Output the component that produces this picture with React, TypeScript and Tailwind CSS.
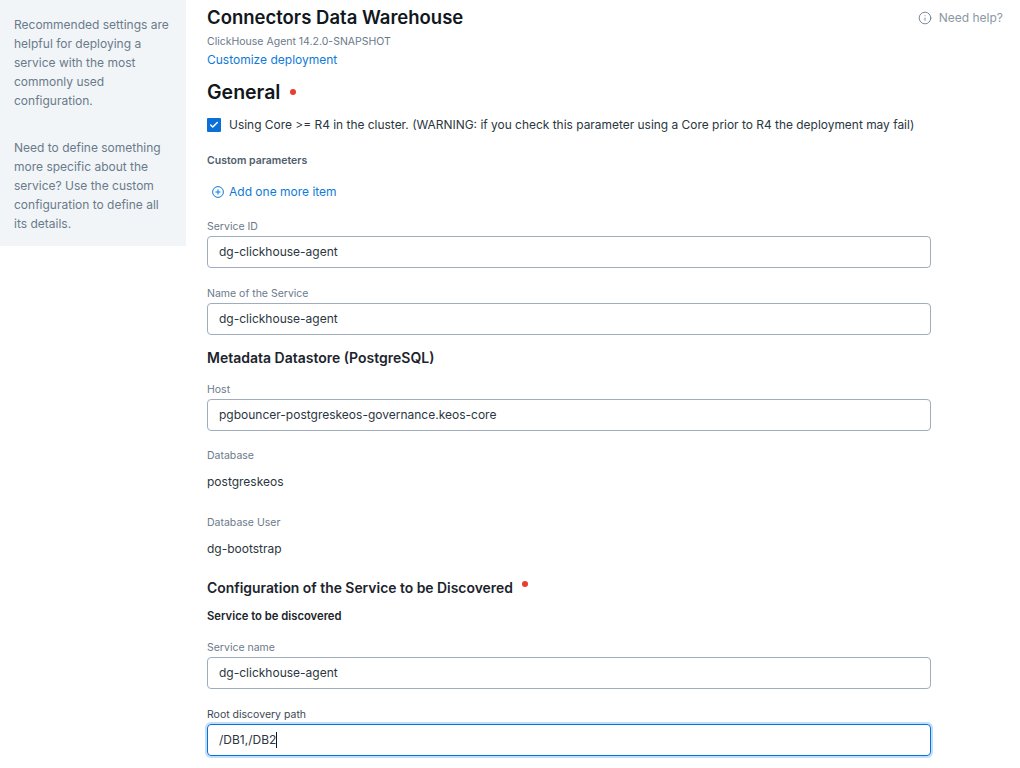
import React from 'react';
import { Check, Info } from 'lucide-react';

const FONT = "font-['Inter','Noto_Sans',sans-serif]";

const Field = ({ label, value, className = '' }: { label: string; value: string; className?: string }) => (
  <div className={className}>
    <div className="h-[14px] text-[10.5px] leading-[16px] text-[#6b7a8a]">{label}</div>
    <div className="mt-[3px] flex h-[32px] items-center rounded-[4px] border border-[#9fadbc] px-[11px] text-[12px] text-[#2b3640]">{value}</div>
  </div>
);

const ReadOnly = ({ label, value, className = '' }: { label: string; value: string; className?: string }) => (
  <div className={className}>
    <div className="h-[14px] text-[10.5px] leading-[16px] text-[#6b7a8a]">{label}</div>
    <div className="mt-[13px] h-[14px] text-[12px] leading-[14px] text-[#2b3640]">{value}</div>
  </div>
);

const Dot = ({ className = '' }: { className?: string }) => (
  <span className={`inline-block rounded-full bg-[#ee3b2f] ${className}`}></span>
);

export default function App() {
  return (
    <div className={`flex h-[768px] w-[1020px] items-start overflow-hidden bg-white ${FONT}`}>
      {/* Sidebar */}
      <aside className="h-[246px] w-[186px] shrink-0 bg-[#f1f5f8] pl-[14px] pr-[12px] pt-[15px] text-[12px] leading-[19px] text-[#6b7a8a]">
        <p>Recommended settings are helpful for deploying a service with the most commonly used configuration.</p>
        <p className="mt-[28px]">Need to define something more specific about the service? Use the custom configuration to define all its details.</p>
      </aside>

      {/* Main */}
      <main className="relative w-[834px] pl-[21px]">
        <div className="absolute right-[17px] top-[10px] flex items-center gap-[7px] text-[12px] leading-[16px] text-[#8a97a5]">
          <Info size={14} strokeWidth={1.5} className="text-[#6b7a8a]" />
          <span>Need help?</span>
        </div>

        <div className="w-[724px]">
          <h1 className="mt-[6px] h-[22px] text-[18.5px] font-semibold leading-[22px] text-[#11171c]">Connectors Data Warehouse</h1>
          <div className="mt-[8px] h-[12px] text-[10.5px] leading-[12px] text-[#6b7a8a]">ClickHouse Agent 14.2.0-SNAPSHOT</div>
          <a className="mt-[4px] block h-[16px] text-[12px] leading-[16px] text-[#0f7ad8]">Customize deployment</a>

          <div className="mt-[12px] flex h-[24px] items-center">
            <h2 className="text-[19.5px] font-semibold leading-[24px] text-[#11171c]">General</h2>
            <Dot className="mb-[1px] ml-[10px] h-[6px] w-[6px]" />
          </div>

          <div className="mt-[14px] flex h-[14px] items-center">
            <span className="flex h-[14px] w-[14px] shrink-0 items-center justify-center rounded-[1px] bg-[#0a6fd6]">
              <Check size={10} strokeWidth={3.5} className="text-white" />
            </span>
            <span className="ml-[8px] whitespace-nowrap text-[11.95px] text-[#2b3640]">Using Core &gt;= R4 in the cluster. (WARNING: if you check this parameter using a Core prior to R4 the deployment may fail)</span>
          </div>

          <div className="mt-[22px] h-[14px] text-[10.5px] font-semibold leading-[14px] text-[#4f5d6b]">Custom parameters</div>

          <div className="ml-[5px] mt-[16px] flex h-[16px] items-center gap-[5px] text-[12px] text-[#0f7ad8]">
            <svg width="12" height="12" viewBox="0 0 12 12" fill="none" stroke="currentColor" strokeWidth="1">
              <circle cx="6" cy="6" r="5.4" />
              <path d="M6 3.4v5.2M3.4 6h5.2" />
            </svg>
            <span>Add one more item</span>
          </div>

          <Field className="mt-[19px]" label="Service ID" value="dg-clickhouse-agent" />
          <Field className="mt-[18px]" label="Name of the Service" value="dg-clickhouse-agent" />

          <h3 className="mt-[14px] h-[18px] text-[14px] font-semibold leading-[18px] text-[#1c242c]">Metadata Datastore (PostgreSQL)</h3>

          <Field className="mt-[15px]" label="Host" value="pgbouncer-postgreskeos-governance.keos-core" />
          <ReadOnly className="mt-[17px]" label="Database" value="postgreskeos" />
          <ReadOnly className="mt-[26px]" label="Database User" value="dg-bootstrap" />

          <div className="mt-[23px] flex h-[18px] items-center">
            <h3 className="text-[13.9px] font-semibold leading-[18px] text-[#1c242c]">Configuration of the Service to be Discovered</h3>
            <Dot className="mb-[9px] ml-[9px] h-[6px] w-[6px]" />
          </div>

          <div className="mt-[12px] h-[14px] text-[11.25px] font-semibold leading-[14px] text-[#1c242c]">Service to be discovered</div>

          <Field className="mt-[17px]" label="Service name" value="dg-clickhouse-agent" />

          <div className="mt-[18px]">
            <div className="h-[14px] text-[10.5px] leading-[16px] text-[#3c4854]">Root discovery path</div>
            <div className="mt-[3px] flex h-[32px] items-center rounded-[4px] border border-[#0a6fd6] px-[11px] text-[12px] text-[#2b3640] shadow-[0_0_0_2px_#bfdffa]">
              /DB1,/DB2<span className="h-[16px] w-px bg-[#11171c]"></span>
            </div>
          </div>
        </div>
      </main>
    </div>
  );
}
